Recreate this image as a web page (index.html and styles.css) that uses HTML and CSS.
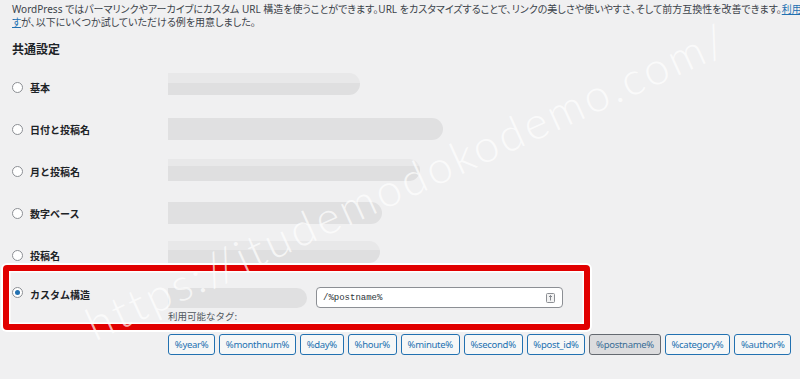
FILE: index.html
```html
<!DOCTYPE html>
<html lang="ja">
<head>
<meta charset="utf-8">
<title>パーマリンク設定</title>
<link rel="stylesheet" href="styles.css">
</head>
<body>
<div class="page">
  <div class="intro">
    <p class="line nowrap">WordPress ではパーマリンクやアーカイブにカスタム URL 構造を使うことができます。URL をカスタマイズすることで、リンクの美しさや使いやすさ、そして前方互換性を改善できます。<a href="#">利用可能なタグが多数用意されていま</a></p>
    <p class="line"><a href="#">す</a>が、以下にいくつか試していただける例を用意しました。</p>
  </div>

  <h2 class="section-title">共通設定</h2>

  <div class="options">
    <div class="opt"><span class="radio"></span><span class="opt-label">基本</span></div>
    <div class="val"><div class="blur b1"></div></div>

    <div class="opt"><span class="radio"></span><span class="opt-label">日付と投稿名</span></div>
    <div class="val"><div class="blur b2"></div></div>

    <div class="opt"><span class="radio"></span><span class="opt-label">月と投稿名</span></div>
    <div class="val"><div class="blur b3"></div></div>

    <div class="opt"><span class="radio"></span><span class="opt-label">数字ベース</span></div>
    <div class="val"><div class="blur b4"></div></div>

    <div class="opt"><span class="radio"></span><span class="opt-label">投稿名</span></div>
    <div class="val"><div class="blur b5"></div></div>

    <div class="opt custom"><span class="radio checked"></span><span class="opt-label">カスタム構造</span></div>
    <div class="val custom-val">
      <div class="custom-line">
        <div class="blur b6"></div>
        <div class="text-input">
          <span class="input-text">/%postname%</span>
          <svg class="input-icon" width="9" height="10" viewBox="0 0 9 10"><rect x="0.5" y="0.5" width="8" height="9" rx="1" fill="#f3f3f3" stroke="#8c8f94"/><path d="M4.5 2.5v5M3 4l1.5-1.5L6 4" fill="none" stroke="#787c82" stroke-width="0.9"/></svg>
        </div>
      </div>
      <div class="tags-caption">利用可能なタグ:</div>
    </div>
  </div>

  <div class="tags">
    <button class="tag">%year%</button>
    <button class="tag">%monthnum%</button>
    <button class="tag">%day%</button>
    <button class="tag">%hour%</button>
    <button class="tag">%minute%</button>
    <button class="tag">%second%</button>
    <button class="tag">%post_id%</button>
    <button class="tag active">%postname%</button>
    <button class="tag">%category%</button>
    <button class="tag">%author%</button>
  </div>

  <div class="highlight"></div>
  <div class="watermark">https://itudemodokodemo.com/</div>
</div>
</body>
</html>
```

FILE: styles.css
```css
* { box-sizing: border-box; }
html, body {
  margin: 0;
  padding: 0;
  background: #f0f0f1;
  overflow: hidden;
}
body {
  font-family: "Noto Sans", "Noto Sans CJK JP", sans-serif;
  color: #3c434a;
}
.page {
  position: relative;
  width: 800px;
  height: 379px;
  padding: 3px 0 0 12px;
  overflow: hidden;
}
.intro .line {
  margin: 0;
  font-size: 10px;
  line-height: 13px;
  font-feature-settings: "palt";
  color: #3c434a;
}
.intro .nowrap { white-space: nowrap; }
.intro a { color: #2271b1; }

.section-title {
  margin: 12px 0 0;
  font-size: 12px;
  line-height: 16px;
  font-weight: 700;
  color: #1d2327;
  font-family: "Noto Sans CJK JP", sans-serif;
}

.options {
  margin-top: 9px;
  display: grid;
  grid-template-columns: 156px 1fr;
  grid-auto-rows: 42px;
}
.opt {
  display: flex;
  align-items: center;
  gap: 7px;
}
.radio {
  width: 11px;
  height: 11px;
  border: 1px solid #8c8f94;
  border-radius: 50%;
  background: #fff;
  display: flex;
  align-items: center;
  justify-content: center;
  flex: none;
}
.radio.checked::after {
  content: "";
  width: 5px;
  height: 5px;
  border-radius: 50%;
  background: #2271b1;
}
.opt-label {
  font-family: "Noto Sans CJK JP", sans-serif;
  font-size: 10px;
  font-weight: 700;
  color: #1d2327;
}
.val {
  display: flex;
  align-items: center;
}
.blur {
  height: 22px;
  background: #e0e0e1;
  border-radius: 0 11px 11px 0;
}
.b1 { width: 192px; margin-bottom: 6px; background: linear-gradient(#e8e8e9 0 45%, #dfdfe0 45%); }
.b2 { width: 275px; }
.b3 { width: 252px; margin-bottom: 2px; background: linear-gradient(#e8e8e9 0 30%, #dfdfe0 30%); }
.b4 { width: 214px; }
.b5 { width: 212px; margin-bottom: 6px; background: linear-gradient(#e8e8e9 0 40%, #dfdfe0 40%); }
.b6 { width: 139px; height: 20px; }

.opt.custom, .val.custom-val {
  align-items: flex-start;
  padding-top: 11px;
}
.opt.custom { height: 22px; box-sizing: content-box; }
.custom-val { flex-direction: column; }
.custom-line {
  display: flex;
  align-items: center;
  gap: 9px;
  height: 22px;
}
.text-input {
  width: 247px;
  height: 21px;
  background: #fff;
  border: 1px solid #8c8f94;
  border-radius: 4px;
  display: flex;
  align-items: center;
  justify-content: space-between;
  padding: 0 7px 0 6px;
}
.input-text {
  font-family: "Liberation Mono", monospace;
  font-size: 9px;
  color: #2c3338;
}
.tags-caption {
  font-family: "Noto Sans CJK JP", sans-serif;
  font-size: 9.5px;
  line-height: 12px;
  color: #50575e;
  margin-top: 2px;
}

.tags {
  margin: 16px 0 0 156px;
  display: flex;
  gap: 4px;
}
.tag {
  height: 21px;
  padding: 0 5.8px;
  border: 1px solid #2271b1;
  border-radius: 3px;
  background: #f6f7f7;
  color: #2271b1;
  font-family: "Noto Sans", sans-serif;
  font-size: 9.5px;
  letter-spacing: -0.3px;
  line-height: 19px;
}
.tag.active {
  background: #dcdcde;
  border-color: #646970;
  color: #3a6d96;
}

.highlight {
  position: absolute;
  left: 3px;
  top: 265px;
  width: 587px;
  height: 65px;
  border: 6px solid #e10000;
  border-radius: 4px;
  box-shadow: 0 0 0 2px #fff, inset 0 0 0 1.5px #fff;
}
.watermark {
  position: absolute;
  left: 97px;
  top: 302px;
  font-family: "Lato", sans-serif;
  font-weight: 300;
  font-size: 45px;
  line-height: 44px;
  letter-spacing: 3px;
  color: rgba(255, 255, 255, 0.7);
  transform-origin: 0 100%;
  transform: rotate(-24.5deg);
  white-space: nowrap;
  pointer-events: none;
}
```
